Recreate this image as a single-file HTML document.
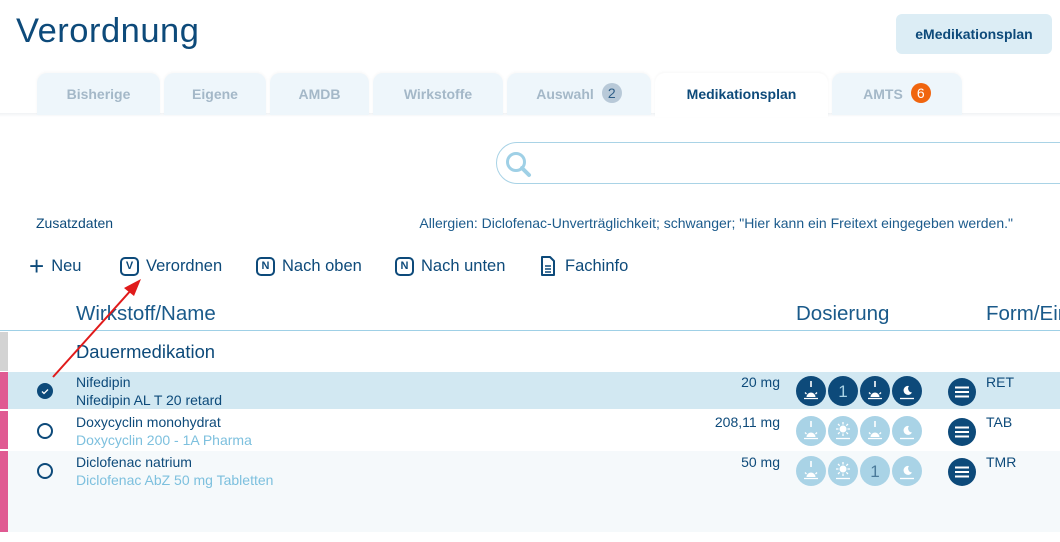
<!DOCTYPE html>
<html><head><meta charset="utf-8">
<style>
*{margin:0;padding:0;box-sizing:border-box}
body{width:1060px;height:542px;overflow:hidden;background:#fff;font-family:"Liberation Sans",sans-serif;color:#0d4a7a;position:relative}
.a{position:absolute;white-space:nowrap}
.tab{position:absolute;top:73px;height:42px;background:#eef6fb;border-radius:10px 10px 0 0;color:#a4b8c8;font-weight:bold;font-size:14px;text-align:center;line-height:42px;box-shadow:0 -1px 3px rgba(0,0,0,0.04)}
.tab.on{background:#fff;color:#0d4a7a}
.badge{display:inline-block;width:20px;height:20px;border-radius:50%;line-height:20px;font-weight:normal;font-size:14px;margin-left:8px;vertical-align:1px}
.tb{font-size:16.5px;color:#0d4a7a;top:254px;height:24px;display:flex;align-items:center}
.kb{display:inline-block;width:19px;height:19px;border:2px solid #0d4a7a;border-radius:5px;font-size:11px;font-weight:bold;text-align:center;line-height:15px;margin-right:7px}
.row{position:absolute;left:0;width:1060px}
.bar{position:absolute;left:0;top:0;bottom:0;width:8px;background:#e05a92}
.n1{font-size:14px;color:#0d4a7a;left:76px}
.n2{font-size:14px;left:76px}
.mg{font-size:14px;color:#0d4a7a;right:280px;text-align:right}
.frm{font-size:14px;left:986px;color:#0d4a7a}
.rad{position:absolute;left:37px;width:16px;height:16px;border:2px solid #0d4a7a;border-radius:50%}
</style></head><body>
<div class="a" style="left:16px;top:12px;font-size:34.5px;color:#0d4a7a;letter-spacing:0.5px">Verordnung</div>
<div class="a" style="left:896px;top:14px;width:156px;height:40px;background:#dcedf5;border-radius:6px;font-size:14px;font-weight:bold;text-align:center;line-height:40px">eMedikationsplan</div>

<div style="position:absolute;left:0;top:113px;width:1060px;height:4px;background:linear-gradient(#f0f3f5,#fff)"></div>
<div class="tab" style="left:37px;width:123px">Bisherige</div>
<div class="tab" style="left:164px;width:102px">Eigene</div>
<div class="tab" style="left:270px;width:99px">AMDB</div>
<div class="tab" style="left:373px;width:130px">Wirkstoffe</div>
<div class="tab" style="left:507px;width:144px">Auswahl<span class="badge" style="background:#b8c9d8;color:#2d5d86">2</span></div>
<div class="tab on" style="left:655px;width:173px;height:44px">Medikationsplan</div>
<div class="tab" style="left:832px;width:130px">AMTS<span class="badge" style="background:#f0650f;color:#fff">6</span></div>

<div class="a" style="left:496px;top:142px;width:600px;height:42px;border:1px solid #a9d3e6;border-radius:21px"></div>
<svg class="a" style="left:502px;top:148px" width="32" height="32" viewBox="0 0 32 32"><circle cx="14" cy="14" r="8.5" fill="none" stroke="#9fd0e6" stroke-width="3"/><path d="M20 20l7 7" stroke="#9fd0e6" stroke-width="4" stroke-linecap="round"/></svg>

<div class="a" style="left:36px;top:215px;font-size:14px">Zusatzdaten</div>
<div class="a" style="right:47px;top:215px;font-size:14px;color:#1c5b8c">Allergien: Diclofenac-Unverträglichkeit; schwanger; "Hier kann ein Freitext eingegeben werden."</div>

<div class="a tb" style="left:29px"><span style="font-size:26px;font-weight:normal;margin-right:7px;line-height:24px">+</span>Neu</div>
<div class="a tb" style="left:120px"><span class="kb">V</span>Verordnen</div>
<div class="a tb" style="left:256px"><span class="kb">N</span>Nach oben</div>
<div class="a tb" style="left:395px"><span class="kb">N</span>Nach unten</div>
<div class="a tb" style="left:540px"><svg width="16" height="20" viewBox="0 0 16 20" style="margin-right:9px"><path d="M2 1h8l4 4v14H2z" fill="none" stroke="#0d4a7a" stroke-width="2" stroke-linejoin="round"/><path d="M5 10h6M5 13h6M5 16h6" stroke="#0d4a7a" stroke-width="1.6"/></svg>Fachinfo</div>

<div class="a" style="left:76px;top:302px;font-size:20.5px;color:#1a5a8a">Wirkstoff/Name</div>
<div class="a" style="left:796px;top:302px;font-size:20.5px;color:#1a5a8a">Dosierung</div>
<div class="a" style="left:986px;top:302px;font-size:20.5px;color:#1a5a8a">Form/Ein</div>
<div class="a" style="left:0;top:330px;width:1060px;height:1px;background:#9fd0e6"></div>

<div class="row" style="top:332px;height:39px"><div class="bar" style="background:#d3d3d3"></div><div class="a" style="left:76px;top:9px;font-size:18.4px">Dauermedikation</div></div>

<svg width="0" height="0" style="position:absolute"><defs>
<g id="rise"><path d="M15 5v6" stroke-width="1.6" fill="none"/><path d="M10.5 21a4.5 4.5 0 0 1 9 0z" stroke="none"/><path d="M8 22.5h14M9 16.5l1.5 1.5M21 16.5l-1.5 1.5" stroke-width="1.3" fill="none"/></g>
<g id="noon"><circle cx="15" cy="13" r="3.5" stroke="none"/><path d="M15 6v2.5M15 17.5v2.5M8 13h2.5M19.5 13h2.5M10 8l1.7 1.7M20 8l-1.7 1.7M10 18l1.7-1.7M20 18l-1.7-1.7M8 22.5h14" stroke-width="1.3" fill="none"/></g>
<g id="night"><path d="M17 10a4.5 4.5 0 1 0 3 6.5a4 4 0 0 1-3-6.5z" stroke="none"/><path d="M8 22.5h14" stroke-width="1.3" fill="none"/></g>
</defs></svg>

<!-- row 1 -->
<div class="row" style="top:372px;height:37px;background:#d2e8f2"><div class="bar"></div>
<div class="a" style="left:37px;top:11px;width:16px;height:16px;border-radius:50%;background:#0d4a7a"><svg width="16" height="16"><path d="M5 8.5l2 2 4-4" fill="none" stroke="#fff" stroke-width="1.3"/></svg></div>
<div class="a n1" style="top:2px">Nifedipin</div><div class="a n2" style="top:20px;color:#0d4a7a">Nifedipin AL T 20 retard</div>
<div class="a mg" style="top:2px">20 mg</div>
<div class="a frm" style="top:2px">RET</div></div>
<!-- row 2 -->
<div class="row" style="top:411px;height:38px;background:#fff"><div class="bar"></div>
<div class="rad" style="top:12px"></div>
<div class="a n1" style="top:3px">Doxycyclin monohydrat</div><div class="a n2" style="top:21px;color:#7dc0de">Doxycyclin 200 - 1A Pharma</div>
<div class="a mg" style="top:3px">208,11 mg</div>
<div class="a frm" style="top:3px">TAB</div></div>
<!-- row 3 -->
<div class="row" style="top:451px;height:81px;background:#f5f9fb"><div class="bar"></div>
<div class="rad" style="top:12px"></div>
<div class="a n1" style="top:3px">Diclofenac natrium</div><div class="a n2" style="top:21px;color:#7dc0de">Diclofenac AbZ 50 mg Tabletten</div>
<div class="a mg" style="top:3px">50 mg</div>
<div class="a frm" style="top:3px">TMR</div></div>

<!-- dose icons -->
<svg class="a" style="left:796px;top:376px" width="126" height="30"><g fill="#0d4a7a"><circle cx="15" cy="15" r="15"/><circle cx="47" cy="15" r="15"/><circle cx="79" cy="15" r="15"/><circle cx="111" cy="15" r="15"/></g><g fill="#fff" stroke="#fff"><use href="#rise" x="0"/><use href="#rise" x="64"/><use href="#night" x="96"/></g><text x="47" y="21" fill="#a9d3e6" font-size="17" text-anchor="middle" font-family="Liberation Sans">1</text></svg>
<svg class="a" style="left:796px;top:416px" width="126" height="30"><g fill="#a9d3e6"><circle cx="15" cy="15" r="15"/><circle cx="47" cy="15" r="15"/><circle cx="79" cy="15" r="15"/><circle cx="111" cy="15" r="15"/></g><g fill="#fff" stroke="#fff"><use href="#rise" x="0"/><use href="#noon" x="32"/><use href="#rise" x="64"/><use href="#night" x="96"/></g></svg>
<svg class="a" style="left:796px;top:456px" width="126" height="30"><g fill="#a9d3e6"><circle cx="15" cy="15" r="15"/><circle cx="47" cy="15" r="15"/><circle cx="79" cy="15" r="15"/><circle cx="111" cy="15" r="15"/></g><g fill="#fff" stroke="#fff"><use href="#rise" x="0"/><use href="#noon" x="32"/><use href="#night" x="96"/></g><text x="79" y="21" fill="#4a7a9a" font-size="17" text-anchor="middle" font-family="Liberation Sans">1</text></svg>

<!-- menu buttons -->
<svg class="a" style="left:948px;top:378px" width="28" height="28"><circle cx="14" cy="14" r="14" fill="#0d4a7a"/><path d="M7 9.5h14M7 14h14M7 18.5h14" stroke="#fff" stroke-width="2"/></svg>
<svg class="a" style="left:948px;top:418px" width="28" height="28"><circle cx="14" cy="14" r="14" fill="#0d4a7a"/><path d="M7 9.5h14M7 14h14M7 18.5h14" stroke="#fff" stroke-width="2"/></svg>
<svg class="a" style="left:948px;top:458px" width="28" height="28"><circle cx="14" cy="14" r="14" fill="#0d4a7a"/><path d="M7 9.5h14M7 14h14M7 18.5h14" stroke="#fff" stroke-width="2"/></svg>

<!-- red arrow -->
<svg class="a" style="left:0;top:0" width="200" height="400"><path d="M53 377L132 289" stroke="#e01b1b" stroke-width="2"/><path d="M141 279L124 288L134 296z" fill="#e01b1b"/></svg>
</body></html>
